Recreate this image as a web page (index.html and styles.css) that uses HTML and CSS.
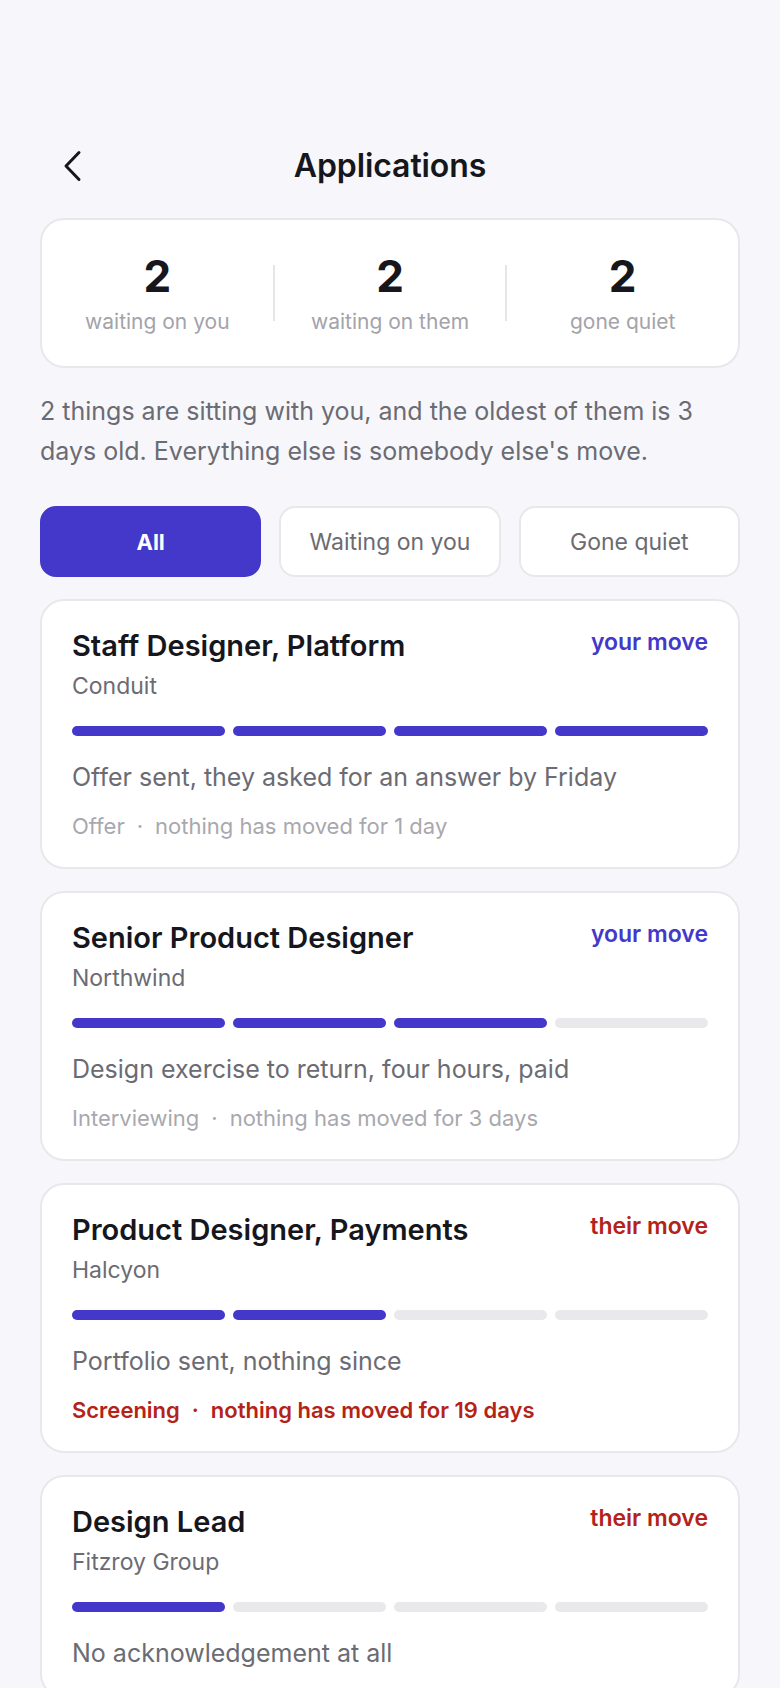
FILE: index.html
```html
<!DOCTYPE html>
<html lang="en">
<head>
    <meta charset="UTF-8">
    <meta name="viewport" content="width=device-width, initial-scale=1.0">
    <title>Applications</title>
    <link rel="stylesheet" href="styles.css">
</head>
<body>

    <div class="page">
        <header class="topbar">
            <a class="back" href="#" aria-label="Back">
                <svg width="22" height="32" viewBox="0 0 22 32" fill="none" stroke="#16161d" stroke-width="3" stroke-linecap="round" stroke-linejoin="round">
                    <polyline points="17,2.5 4,16 17,29.5"></polyline>
                </svg>
            </a>
            <h1>Applications</h1>
            <span></span>
        </header>

        <section class="stats">
            <div class="stat">
                <div class="stat-num">2</div>
                <div class="stat-label">waiting on you</div>
            </div>
            <div class="divider"></div>
            <div class="stat">
                <div class="stat-num">2</div>
                <div class="stat-label">waiting on them</div>
            </div>
            <div class="divider"></div>
            <div class="stat">
                <div class="stat-num">2</div>
                <div class="stat-label">gone quiet</div>
            </div>
        </section>

        <p class="summary">2 things are sitting with you, and the oldest of them is 3 days old. Everything else is somebody else's move.</p>

        <!-- Filters -->
        <nav class="filters">
            <button class="filter active">All</button>
            <button class="filter">Waiting on you</button>
            <button class="filter">Gone quiet</button>
        </nav>

        <!-- Application cards -->
        <div class="cards">
            <div class="card">
                <div class="card-head">
                    <h3>Staff Designer, Platform</h3>
                    <span class="move yours">your move</span>
                </div>
                <div class="company">Conduit</div>
                <div class="progress">
                    <span class="seg on"></span>
                    <span class="seg on"></span>
                    <span class="seg on"></span>
                    <span class="seg on"></span>
                </div>
                <p class="note">Offer sent, they asked for an answer by Friday</p>
                <div class="meta"><span>Offer</span><span class="dot">·</span><span>nothing has moved for 1 day</span></div>
            </div>

            <div class="card">
                <div class="card-head">
                    <h3>Senior Product Designer</h3>
                    <span class="move yours">your move</span>
                </div>
                <div class="company">Northwind</div>
                <div class="progress">
                    <span class="seg on"></span>
                    <span class="seg on"></span>
                    <span class="seg on"></span>
                    <span class="seg"></span>
                </div>
                <p class="note">Design exercise to return, four hours, paid</p>
                <div class="meta"><span>Interviewing</span><span class="dot">·</span><span>nothing has moved for 3 days</span></div>
            </div>

            <div class="card">
                <div class="card-head">
                    <h3>Product Designer, Payments</h3>
                    <span class="move theirs">their move</span>
                </div>
                <div class="company">Halcyon</div>
                <div class="progress">
                    <span class="seg on"></span>
                    <span class="seg on"></span>
                    <span class="seg"></span>
                    <span class="seg"></span>
                </div>
                <p class="note">Portfolio sent, nothing since</p>
                <div class="meta stale"><span>Screening</span><span class="dot">·</span><span>nothing has moved for 19 days</span></div>
            </div>

            <div class="card">
                <div class="card-head">
                    <h3>Design Lead</h3>
                    <span class="move theirs">their move</span>
                </div>
                <div class="company">Fitzroy Group</div>
                <div class="progress">
                    <span class="seg on"></span>
                    <span class="seg"></span>
                    <span class="seg"></span>
                    <span class="seg"></span>
                </div>
                <p class="note">No acknowledgement at all</p>
            </div>
        </div>
    </div>

</body>
</html>
```

FILE: styles.css
```css
body {
    font-family: Inter, "Noto Sans", sans-serif;
    background-color: #f7f7fb;
    color: #16161d;
    margin: 0;
    padding: 0;
}

.page {
    padding: 0 40px 40px;
}

.topbar {
    display: grid;
    grid-template-columns: 1fr auto 1fr;
    align-items: center;
    padding-top: 146px;
    height: 40px;
}

.back {
    display: flex;
    align-items: center;
    margin-left: 22px;
    width: 22px;
}

.topbar h1 {
    margin: 0;
    font-size: 32px;
    line-height: 40px;
    font-weight: 600;
    letter-spacing: -0.1px;
}

.stats {
    display: flex;
    align-items: center;
    margin-top: 32px;
    padding: 30px 0;
    background-color: #fff;
    border: 2px solid #e8e8ec;
    border-radius: 24px;
}

.stat {
    flex: 1;
    text-align: center;
}

.stat-num {
    font-size: 44px;
    line-height: 52px;
    font-weight: 700;
}

.stat-label {
    margin-top: 6px;
    font-size: 21px;
    line-height: 28px;
    color: #a3a3aa;
}

.divider {
    width: 2px;
    height: 56px;
    background-color: #e6e6ea;
}

.summary {
    margin: 23px 0 0;
    font-size: 25px;
    line-height: 40px;
    color: #6b6b73;
}

.filters {
    display: grid;
    grid-template-columns: repeat(3, 1fr);
    gap: 18px;
    margin-top: 35px;
}

.filter {
    height: 71px;
    font-family: inherit;
    font-size: 23px;
    font-weight: 400;
    color: #6b6b70;
    background-color: #fff;
    border: 2px solid #e8e8ec;
    border-radius: 16px;
}

.filter.active {
    color: #fff;
    font-size: 22px;
    font-weight: 700;
    background-color: #4338ca;
    border-color: #4338ca;
}

.cards {
    display: flex;
    flex-direction: column;
    gap: 22px;
    margin-top: 22px;
}

.card {
    padding: 27px 30px 27px;
    background-color: #fff;
    border: 2px solid #e8e8ec;
    border-radius: 24px;
}

.card-head {
    display: flex;
    justify-content: space-between;
    align-items: flex-start;
}

.card-head h3 {
    margin: 0;
    font-size: 29px;
    line-height: 36px;
    font-weight: 600;
}

.move {
    font-size: 23px;
    line-height: 28px;
    font-weight: 600;
}

.move.yours {
    color: #4338ca;
}

.move.theirs {
    color: #b42318;
}

.company {
    margin-top: 8px;
    font-size: 23px;
    line-height: 28px;
    color: #6b6b73;
}

.progress {
    display: flex;
    gap: 8px;
    margin-top: 26px;
}

.seg {
    flex: 1;
    height: 10px;
    border-radius: 5px;
    background-color: #e9e9ec;
}

.seg.on {
    background-color: #4338ca;
}

.note {
    margin: 25px 0 0;
    font-size: 25px;
    line-height: 32px;
    color: #6b6b73;
}

.meta {
    margin-top: 19px;
    font-size: 22px;
    line-height: 28px;
    color: #a8a8ae;
}

.meta .dot {
    margin: 0 12px;
}

.meta.stale {
    color: #b42318;
    font-weight: 600;
}
```
